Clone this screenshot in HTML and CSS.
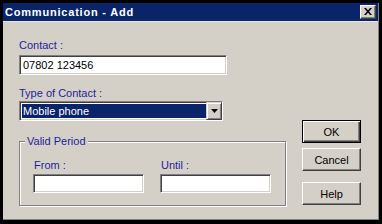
FILE: index.html
```html
<!DOCTYPE html>
<html>
<head>
<meta charset="utf-8">
<link rel="stylesheet" href="styles.css">
</head>
<body>
<div class="window">
  <div class="titlebar">
    <span class="title">Communication - Add</span>
    <span class="close"><svg width="8" height="7" viewBox="0 0 8 7"><path d="M0 0h2l2 2.5 2-2.5h2l-3 3.5 3 3.5h-2l-2-2.5-2 2.5h-2l3-3.5z" fill="#000"/></svg></span>
  </div>
  <div class="content">
    <div class="left">
      <div class="label">Contact :</div>
      <div class="field wide">07802 123456</div>
      <div class="label type">Type of Contact :</div>
      <div class="select">
        <div class="selected">Mobile phone</div>
        <div class="arrow"><svg width="7" height="4" viewBox="0 0 7 4"><path d="M0 0h7l-3.5 4z" fill="#000"/></svg></div>
      </div>
      <div class="group">
        <span class="legend">Valid Period</span>
        <div class="cols">
          <div class="col">
            <div class="label">From :</div>
            <div class="field small"></div>
          </div>
          <div class="col">
            <div class="label">Until :</div>
            <div class="field small"></div>
          </div>
        </div>
      </div>
    </div>
    <div class="right">
      <div class="btn default"><span>OK</span></div>
      <div class="btn cancel"><span>Cancel</span></div>
      <div class="btn help"><span>Help</span></div>
    </div>
  </div>
</div>
</body>
</html>
```
FILE: styles.css
```css
html, body {
  margin: 0;
  padding: 0;
  background: #000;
  width: 382px;
  height: 224px;
  overflow: hidden;
  font-family: "Liberation Sans", Arial, sans-serif;
  font-size: 11px;
}
.window {
  margin: 3px 0 0 3px;
  width: 375px;
  height: 216px;
  background: #d4d0c8;
  border-right: 1px solid #808080;
  border-bottom: 1px solid #808080;
  display: flex;
  flex-direction: column;
}
.titlebar {
  height: 18px;
  background: #0a246a;
  display: flex;
  align-items: center;
  justify-content: space-between;
  padding: 0 2px 0 2px;
  border-bottom: 1px solid #e8e6e0;
}
.title {
  color: #fff;
  font-weight: bold;
  font-size: 11px;
  letter-spacing: 0.8px;
}
.close {
  width: 16px;
  height: 14px;
  box-sizing: border-box;
  background: #d4d0c8;
  border-top: 1px solid #fff;
  border-left: 1px solid #fff;
  border-right: 1px solid #404040;
  border-bottom: 1px solid #404040;
  box-shadow: inset -1px -1px #808080;
  display: flex;
  align-items: center;
  justify-content: center;
  padding-bottom: 1px;
}
.content {
  display: flex;
  padding: 17px 0 0 16px;
  gap: 16px;
}
.left {
  width: 267px;
  display: flex;
  flex-direction: column;
}
.label {
  color: #1f1f9c;
  line-height: 13px;
  height: 13px;
}
.field {
  box-sizing: border-box;
  background: #fff;
  border-top: 1px solid #808080;
  border-left: 1px solid #808080;
  border-right: 1px solid #fff;
  border-bottom: 1px solid #fff;
  box-shadow: inset 1px 1px #404040, inset -1px -1px #d4d0c8;
  color: #000;
  line-height: 18px;
  padding-left: 3px;
}
.wide {
  margin-top: 3px;
  width: 208px;
  height: 20px;
}
.type {
  margin-top: 12px;
}
.select {
  margin-top: 1px;
  width: 204px;
  height: 20px;
  box-sizing: border-box;
  background: #fff;
  border-top: 1px solid #808080;
  border-left: 1px solid #808080;
  border-right: 1px solid #fff;
  border-bottom: 1px solid #fff;
  box-shadow: inset 1px 1px #404040, inset -1px -1px #d4d0c8;
  display: flex;
  padding: 2px;
}
.selected {
  flex: 1;
  background: #0a246a;
  color: #fff;
  line-height: 14px;
  padding-left: 1px;
}
.arrow {
  width: 16px;
  box-sizing: border-box;
  background: #d4d0c8;
  border-top: 1px solid #d4d0c8;
  border-left: 1px solid #d4d0c8;
  border-right: 1px solid #404040;
  border-bottom: 1px solid #404040;
  box-shadow: inset 1px 1px #fff, inset -1px -1px #808080;
  display: flex;
  align-items: center;
  justify-content: center;
  margin: -2px -2px -2px 0;
  height: 18px;
  align-self: center;
}
.group {
  position: relative;
  margin-top: 20px;
  height: 65px;
  box-sizing: border-box;
  border: 1px solid #808080;
  box-shadow: inset 1px 1px #fff, 1px 1px #fff;
  padding: 17px 0 0 13px;
}
.legend {
  position: absolute;
  top: -7px;
  left: 5px;
  padding: 0 2px;
  background: #d4d0c8;
  color: #1f1f9c;
  line-height: 13px;
}
.cols {
  display: flex;
  gap: 16px;
}
.col {
  display: flex;
  flex-direction: column;
}
.col .label {
  padding-left: 1px;
}
.small {
  margin-top: 2px;
  width: 111px;
  height: 19px;
}
.right {
  display: flex;
  flex-direction: column;
  padding-top: 81px;
}
.btn {
  width: 59px;
  height: 23px;
  box-sizing: border-box;
  background: #d4d0c8;
  border-top: 1px solid #fff;
  border-left: 1px solid #fff;
  border-right: 1px solid #404040;
  border-bottom: 1px solid #404040;
  box-shadow: inset -1px -1px #808080;
  display: flex;
  align-items: center;
  justify-content: center;
  color: #000;
}
.btn.default {
  border: 1px solid #000;
  box-shadow: inset 1px 1px #fff, inset -1px -1px #404040, inset -2px -2px #808080;
}
.cancel {
  margin-top: 5px;
}
.help {
  margin-top: 11px;
}
```
